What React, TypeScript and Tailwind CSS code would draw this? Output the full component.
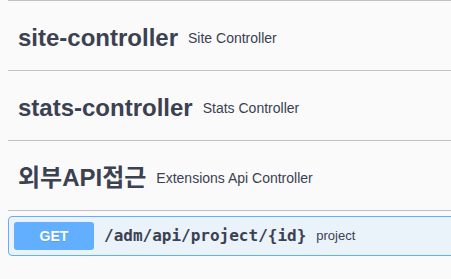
export default function App() {
  const tags = [
    { name: 'site-controller', desc: 'Site Controller' },
    { name: 'stats-controller', desc: 'Stats Controller' },
    { name: '외부API접근', desc: 'Extensions Api Controller' },
  ];

  return (
    <div className="min-h-screen bg-[#fafafa] overflow-hidden text-[#3b4151] font-['Liberation_Sans','Noto_Sans_CJK_KR',sans-serif]">
      <div className="ml-2 mr-[-40px]">
        {/* bottom edge of the previous tag */}
        <div className="h-px bg-[#c1c2c7] mb-[5px]"></div>

        {tags.map((tag) => (
          <h3
            key={tag.name}
            className="flex items-center h-[65px] mb-[5px] px-[10px] border-b border-[#c1c2c7]"
          >
            <span className="text-2xl font-bold">{tag.name}</span>
            <small className="text-sm px-[10px]">{tag.desc}</small>
          </h3>
        ))}

        {/* GET operation */}
        <div className="flex items-center p-[5px] border border-[#61affe] rounded bg-[rgba(97,175,254,0.1)]">
          <span className="flex items-center justify-center w-[80px] h-[28px] rounded-[3px] bg-[#61affe] text-white text-sm font-bold [text-shadow:0_1px_0_rgba(0,0,0,0.1)]">
            GET
          </span>
          <span className="px-[10px] text-base font-bold font-['DejaVu_Sans_Mono',monospace]">
            /adm/api/project/{'{id}'}
          </span>
          <span className="text-[13px]">project</span>
        </div>
      </div>
    </div>
  );
}
